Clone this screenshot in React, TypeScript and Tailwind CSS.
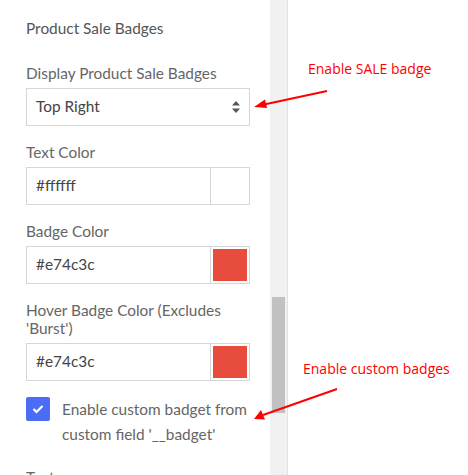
import React from 'react';

function Label({ children }: { children: React.ReactNode }) {
  return <div className="text-[15.4px] leading-[18px] text-[#666666]">{children}</div>;
}

function ColorField({ value, swatch }: { value: string; swatch?: string }) {
  return (
    <div className="mt-[6px] flex h-[38px] w-[224px] border border-[#d6d6d6] bg-white">
      <div className="flex flex-1 items-center pl-[9px] text-[15.4px] text-[#444444]">{value}</div>
      <div className="w-[39px] border-l border-[#d6d6d6] p-[2px]">
        {swatch && <div className="h-full w-full" style={{ backgroundColor: swatch }} />}
      </div>
    </div>
  );
}

export default function App() {
  return (
    <div className="relative flex h-[475px] w-[468px] overflow-hidden bg-white font-['Lato',sans-serif]">
      {/* Settings panel */}
      <div className="w-[270px] pl-[26px] pt-[19px]">
        <div className="text-[15.4px] leading-[18px] text-[#555555]">Product Sale Badges</div>

        <div className="mt-[27px]">
          <Label>Display Product Sale Badges</Label>
          <div className="mt-[6px] flex h-[38px] w-[224px] items-center justify-between border border-[#d6d6d6] bg-white pl-[9px] pr-[9px] text-[15.4px] text-[#444444]">
            <span>Top Right</span>
            <svg width="8" height="12" viewBox="0 0 8 12">
              <path d="M4 0 L8 4.5 L0 4.5 Z" fill="#555" />
              <path d="M4 12 L8 7.5 L0 7.5 Z" fill="#555" />
            </svg>
          </div>
        </div>

        <div className="mt-[17px]">
          <Label>Text Color</Label>
          <ColorField value="#ffffff" />
        </div>

        <div className="mt-[17px]">
          <Label>Badge Color</Label>
          <ColorField value="#e74c3c" swatch="#e74c3c" />
        </div>

        <div className="mt-[17px] w-[224px]">
          <Label>Hover Badge Color (Excludes 'Burst')</Label>
          <ColorField value="#e74c3c" swatch="#e74c3c" />
        </div>

        <div className="mt-[16px] flex w-[232px] items-start">
          <div className="flex h-[24px] w-[24px] shrink-0 items-center justify-center rounded-[2px] bg-[#4a6cf7]">
            <svg width="12" height="10" viewBox="0 0 12 10">
              <path d="M1.5 5 L4.5 8 L10.5 2" fill="none" stroke="white" strokeWidth="2.2" />
            </svg>
          </div>
          <div className="ml-[12px] text-[15.4px] leading-[25px] text-[#666666]">
            Enable custom badget from custom field '__badget'
          </div>
        </div>

        <div className="mt-[21px]">
          <Label>Text</Label>
        </div>
      </div>

      {/* Scrollbar */}
      <div className="relative w-[17px] bg-[#f1f1f1]">
        <div className="absolute left-[2px] top-[297px] h-[116px] w-[13px] bg-[#c1c1c1]" />
      </div>
      <div className="w-px bg-[#e3e3e3]" />
      <div className="flex-1 bg-white" />

      {/* Annotations */}
      <div className="absolute left-[308px] top-[59px] font-['Open_Sans',sans-serif] text-[14px] leading-[19px] text-[#ff0000]">
        Enable SALE badge
      </div>
      <div className="absolute left-[303px] top-[359px] font-['Open_Sans',sans-serif] text-[14px] leading-[19px] text-[#ff0000]">
        Enable custom badges
      </div>
      <svg className="pointer-events-none absolute left-0 top-0" width="468" height="475">
        <line x1="327" y1="91" x2="264" y2="104.5" stroke="#ff0000" strokeWidth="2" />
        <path d="M254 107 L265 99.5 L267 108 Z" fill="#ff0000" />
        <line x1="337" y1="389" x2="263" y2="415" stroke="#ff0000" strokeWidth="2" />
        <path d="M254 419 L261 410 L265 419.5 Z" fill="#ff0000" />
      </svg>
    </div>
  );
}
